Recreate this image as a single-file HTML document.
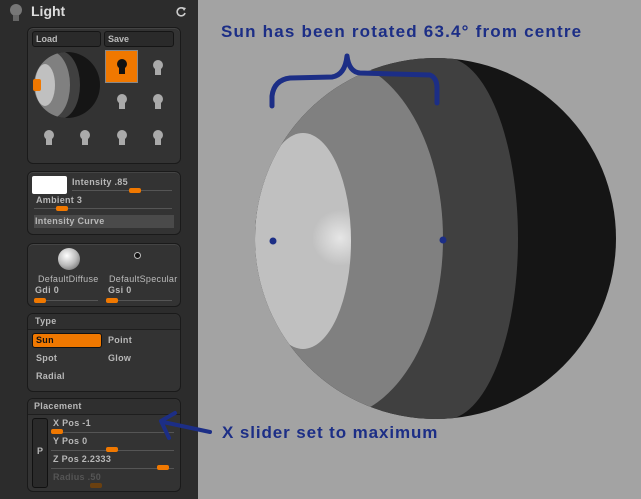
<!DOCTYPE html>
<html><head><style>
body{margin:0;width:641px;height:499px;overflow:hidden;background:#a3a3a3;position:relative;font-family:"Liberation Sans",sans-serif}
.side{position:absolute;left:0;top:0;width:198px;height:499px;background:#2c2c2c}
.p{position:absolute;left:27px;width:152px;background:#333;border:1px solid #1a1a1a;border-radius:6px;box-shadow:0 1px 0 #444 inset}
.t{position:absolute;font-size:9px;font-weight:bold;color:#b8b8b8;white-space:nowrap;letter-spacing:.3px}
.btn{position:absolute;background:#2a2a2a;border:1px solid #151515;border-radius:3px;color:#bbb;font-size:9px;font-weight:bold;padding-left:3px;box-sizing:border-box;line-height:14px}
.ln{position:absolute;height:1px;background:#555}
.h{position:absolute;width:12px;height:5px;background:#f07800;border-radius:2px}
.hd{position:absolute;left:0;right:0;top:0;height:15px;background:#2f2f2f;border-bottom:1px solid #1e1e1e;border-radius:6px 6px 0 0}
.nv{position:absolute;color:#1c2e86;font-size:17px;font-weight:bold;white-space:nowrap}
</style></head><body>
<div class="side">
 <svg style="position:absolute;left:8px;top:3px" width="16" height="22"><circle cx="8" cy="7" r="6" fill="#777"/><rect x="5" y="12" width="6" height="6" fill="#666"/></svg>
 <div style="position:absolute;left:31px;top:3px;color:#ddd;font-size:14px;font-weight:bold">Light</div>
 <svg style="position:absolute;left:175px;top:6px" width="12" height="12"><path d="M9 3A4 4 0 1 0 10 7" stroke="#ccc" stroke-width="1.6" fill="none"/><path d="M7 1L11 2L9 5Z" fill="#ccc"/></svg>

 <div class="p" style="top:27px;height:135px">
  <div class="btn" style="left:4px;top:3px;width:69px;height:16px">Load</div>
  <div class="btn" style="left:76px;top:3px;width:70px;height:16px">Save</div>
  <svg style="position:absolute;left:5px;top:23px" width="68" height="68">
   <defs><clipPath id="c"><circle cx="34" cy="34" r="33"/></clipPath></defs>
   <g clip-path="url(#c)"><rect width="68" height="68" fill="#151515"/>
   <ellipse cx="27" cy="34" rx="20" ry="34" fill="#404040"/>
   <ellipse cx="17" cy="34" rx="20" ry="34" fill="#808080"/>
   <ellipse cx="12" cy="34" rx="10" ry="21" fill="#c0c0c0"/></g>
   <rect x="0" y="28" width="8" height="12" rx="2" fill="#f07800"/>
  </svg>
  <div style="position:absolute;left:77px;top:22px;width:33px;height:33px;background:#f07800;border:1px solid #888;box-sizing:border-box"></div>
  <svg style="position:absolute;left:0;top:0" width="152" height="135" fill="#aaa">
   <g fill="#111"><circle cx="94" cy="36" r="5"/><rect x="91" y="40" width="6" height="6"/></g>
   <g><circle cx="130" cy="37" r="5"/><rect x="127" y="41" width="6" height="6"/>
   <circle cx="94" cy="71" r="5"/><rect x="91" y="75" width="6" height="6"/>
   <circle cx="130" cy="71" r="5"/><rect x="127" y="75" width="6" height="6"/>
   <circle cx="21" cy="107" r="5"/><rect x="18" y="111" width="6" height="6"/>
   <circle cx="57" cy="107" r="5"/><rect x="54" y="111" width="6" height="6"/>
   <circle cx="94" cy="107" r="5"/><rect x="91" y="111" width="6" height="6"/>
   <circle cx="130" cy="107" r="5"/><rect x="127" y="111" width="6" height="6"/></g>
  </svg>
 </div>

 <div class="p" style="top:171px;height:62px">
  <div style="position:absolute;left:4px;top:4px;width:35px;height:18px;background:#fff;border-radius:2px"></div>
  <div class="t" style="left:44px;top:5px">Intensity .85</div>
  <div class="ln" style="left:44px;top:18px;width:100px"></div><div class="h" style="left:101px;top:16px"></div>
  <div class="t" style="left:8px;top:23px">Ambient 3</div>
  <div class="ln" style="left:6px;top:36px;width:138px"></div><div class="h" style="left:28px;top:34px"></div>
  <div style="position:absolute;left:6px;top:43px;width:140px;height:13px;background:#4a4a4a"></div>
  <div class="t" style="left:7px;top:44px">Intensity Curve</div>
 </div>

 <div class="p" style="top:243px;height:62px">
  <div style="position:absolute;left:30px;top:4px;width:22px;height:22px;border-radius:50%;background:radial-gradient(circle at 40% 35%,#fff,#bbb 50%,#555)"></div>
  <div style="position:absolute;left:106px;top:8px;width:5px;height:5px;border-radius:50%;background:#111;border:1px solid #bbb"></div>
  <div class="t" style="left:10px;top:30px;font-weight:normal;color:#bbb">DefaultDiffuse</div>
  <div class="t" style="left:81px;top:30px;font-weight:normal;color:#bbb">DefaultSpecular</div>
  <div class="t" style="left:7px;top:41px">Gdi 0</div><div class="t" style="left:80px;top:41px">Gsi 0</div>
  <div class="ln" style="left:6px;top:56px;width:64px"></div><div class="h" style="left:6px;top:54px"></div>
  <div class="ln" style="left:78px;top:56px;width:66px"></div><div class="h" style="left:78px;top:54px"></div>
 </div>

 <div class="p" style="top:313px;height:77px">
  <div class="hd"></div><div class="t" style="left:7px;top:2px">Type</div>
  <div style="position:absolute;left:4px;top:19px;width:70px;height:15px;background:#f07800;border:1px solid #111;border-radius:3px;box-sizing:border-box"></div>
  <div class="t" style="left:8px;top:21px;color:#111">Sun</div>
  <div class="t" style="left:80px;top:21px">Point</div>
  <div class="t" style="left:8px;top:39px">Spot</div>
  <div class="t" style="left:80px;top:39px">Glow</div>
  <div class="t" style="left:8px;top:57px">Radial</div>
 </div>

 <div class="p" style="top:398px;height:92px">
  <div class="hd"></div><div class="t" style="left:6px;top:2px">Placement</div>
  <div style="position:absolute;left:4px;top:19px;width:16px;height:70px;background:#2a2a2a;border:1px solid #111;border-radius:3px;box-sizing:border-box"></div>
  <div class="t" style="left:9px;top:47px">P</div>
  <div class="t" style="left:25px;top:19px">X Pos -1</div>
  <div class="ln" style="left:23px;top:33px;width:123px"></div><div class="h" style="left:23px;top:30px"></div>
  <div class="t" style="left:25px;top:37px">Y Pos 0</div>
  <div class="ln" style="left:23px;top:51px;width:123px"></div><div class="h" style="left:78px;top:48px"></div>
  <div class="t" style="left:25px;top:55px">Z Pos 2.2333</div>
  <div class="ln" style="left:23px;top:69px;width:123px"></div><div class="h" style="left:129px;top:66px"></div>
  <div class="t" style="left:25px;top:73px;color:#555">Radius .50</div>
  <div class="h" style="left:62px;top:84px;background:#6a4010"></div>
 </div>
</div>

<svg style="position:absolute;left:0;top:0" width="641" height="499">
 <defs><clipPath id="s"><circle cx="435.5" cy="238.5" r="180.5"/></clipPath>
 <clipPath id="l"><ellipse cx="303" cy="241" rx="48" ry="108"/></clipPath>
 <radialGradient id="g" cx="340" cy="238" r="28" gradientUnits="userSpaceOnUse"><stop offset="0" stop-color="#e6e6e6"/><stop offset="1" stop-color="#c0c0c0"/></radialGradient></defs>
 <g clip-path="url(#s)">
  <rect x="250" y="50" width="380" height="380" fill="#151515"/>
  <ellipse cx="445" cy="238.5" rx="73" ry="181" fill="#404040"/>
  <rect x="250" y="50" width="195" height="380" fill="#404040"/>
  <ellipse cx="331" cy="238.5" rx="112" ry="180" fill="#808080"/>
  <rect x="250" y="130" width="110" height="225" fill="url(#g)" clip-path="url(#l)"/>
 </g>
 <circle cx="273" cy="241" r="3.5" fill="#1c2e86"/><circle cx="443" cy="240" r="3.5" fill="#1c2e86"/>
 <path d="M272 106L272 96Q274 80 290 78L332 77Q345 75 347 56Q349 72 360 73L430 75Q437 78 437 88L437 103" stroke="#1c2e86" stroke-width="5" fill="none" stroke-linecap="round" stroke-linejoin="round"/>
 <path d="M210 432L163 422M175 413L161 421L169 438" stroke="#1c2e86" stroke-width="4" fill="none" stroke-linecap="round" stroke-linejoin="round"/>
</svg>
<div class="nv" style="left:221px;top:22px;letter-spacing:1.2px">Sun has been rotated 63.4° from centre</div>
<div class="nv" style="left:222px;top:423px;letter-spacing:0.9px">X slider set to maximum</div>
</body></html>
